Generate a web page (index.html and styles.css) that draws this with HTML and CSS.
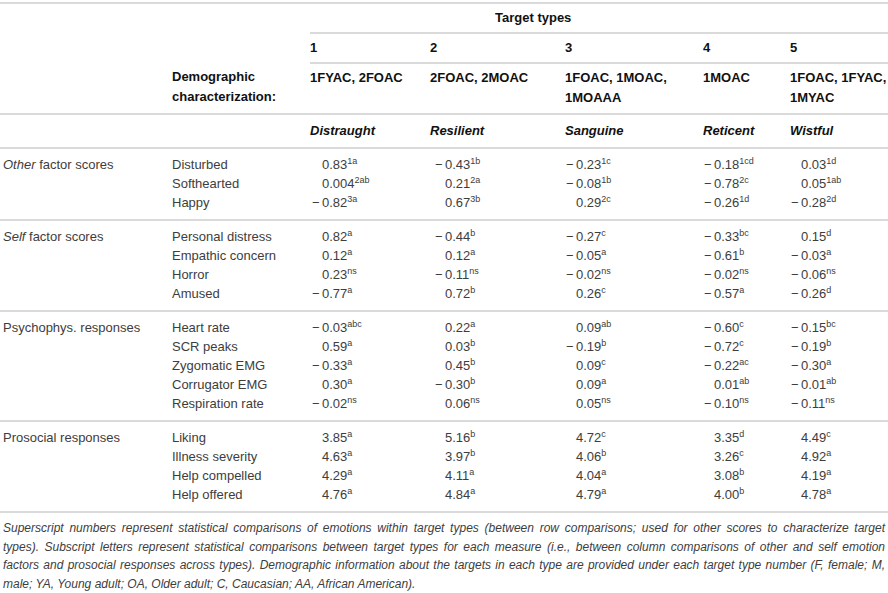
FILE: index.html
```html
<!DOCTYPE html>
<html lang="en">
<head>
    <meta charset="UTF-8">
    <meta name="viewport" content="width=device-width, initial-scale=1.0">
    <title>Target types</title>
    <link rel="stylesheet" href="styles.css">
</head>
<body>
    <div class="table-wrap">
        <table class="data">
            <colgroup>
                <col class="c-group">
                <col class="c-measure">
                <col class="c-t1">
                <col class="c-t2">
                <col class="c-t3">
                <col class="c-t4">
                <col class="c-t5">
            </colgroup>
            <thead>
                <tr class="head-top">
                    <th colspan="2"></th>
                    <th colspan="5" class="line span-title">Target types</th>
                </tr>
                <tr class="head-num">
                    <th colspan="2"></th>
                    <th class="line">1</th>
                    <th class="line">2</th>
                    <th class="line">3</th>
                    <th class="line">4</th>
                    <th class="line">5</th>
                </tr>
                <tr class="head-demo line-row">
                    <th></th>
                    <th>Demographic characterization:</th>
                    <th>1FYAC, 2FOAC</th>
                    <th>2FOAC, 2MOAC</th>
                    <th>1FOAC, 1MOAC, 1MOAAA</th>
                    <th>1MOAC</th>
                    <th>1FOAC, 1FYAC, 1MYAC</th>
                </tr>
                <tr class="head-name line-row">
                    <th></th>
                    <th></th>
                    <th><em>Distraught</em></th>
                    <th><em>Resilient</em></th>
                    <th><em>Sanguine</em></th>
                    <th><em>Reticent</em></th>
                    <th><em>Wistful</em></th>
                </tr>
            </thead>
            <tbody>
                <tr>
                    <td><em>Other</em> factor scores</td>
                    <td>Disturbed</td>
                    <td><span class="sg"></span>0.83<sup>1a</sup></td>
                    <td><span class="sg">&minus;</span>0.43<sup>1b</sup></td>
                    <td><span class="sg">&minus;</span>0.23<sup>1c</sup></td>
                    <td><span class="sg">&minus;</span>0.18<sup>1cd</sup></td>
                    <td><span class="sg"></span>0.03<sup>1d</sup></td>
                </tr>
                <tr>
                    <td></td>
                    <td>Softhearted</td>
                    <td><span class="sg"></span>0.004<sup>2ab</sup></td>
                    <td><span class="sg"></span>0.21<sup>2a</sup></td>
                    <td><span class="sg">&minus;</span>0.08<sup>1b</sup></td>
                    <td><span class="sg">&minus;</span>0.78<sup>2c</sup></td>
                    <td><span class="sg"></span>0.05<sup>1ab</sup></td>
                </tr>
                <tr>
                    <td></td>
                    <td>Happy</td>
                    <td><span class="sg">&minus;</span>0.82<sup>3a</sup></td>
                    <td><span class="sg"></span>0.67<sup>3b</sup></td>
                    <td><span class="sg"></span>0.29<sup>2c</sup></td>
                    <td><span class="sg">&minus;</span>0.26<sup>1d</sup></td>
                    <td><span class="sg">&minus;</span>0.28<sup>2d</sup></td>
                </tr>
            </tbody>
            <tbody>
                <tr>
                    <td><em>Self</em> factor scores</td>
                    <td>Personal distress</td>
                    <td><span class="sg"></span>0.82<sup>a</sup></td>
                    <td><span class="sg">&minus;</span>0.44<sup>b</sup></td>
                    <td><span class="sg">&minus;</span>0.27<sup>c</sup></td>
                    <td><span class="sg">&minus;</span>0.33<sup>bc</sup></td>
                    <td><span class="sg"></span>0.15<sup>d</sup></td>
                </tr>
                <tr>
                    <td></td>
                    <td>Empathic concern</td>
                    <td><span class="sg"></span>0.12<sup>a</sup></td>
                    <td><span class="sg"></span>0.12<sup>a</sup></td>
                    <td><span class="sg">&minus;</span>0.05<sup>a</sup></td>
                    <td><span class="sg">&minus;</span>0.61<sup>b</sup></td>
                    <td><span class="sg">&minus;</span>0.03<sup>a</sup></td>
                </tr>
                <tr>
                    <td></td>
                    <td>Horror</td>
                    <td><span class="sg"></span>0.23<sup>ns</sup></td>
                    <td><span class="sg">&minus;</span>0.11<sup>ns</sup></td>
                    <td><span class="sg">&minus;</span>0.02<sup>ns</sup></td>
                    <td><span class="sg">&minus;</span>0.02<sup>ns</sup></td>
                    <td><span class="sg">&minus;</span>0.06<sup>ns</sup></td>
                </tr>
                <tr>
                    <td></td>
                    <td>Amused</td>
                    <td><span class="sg">&minus;</span>0.77<sup>a</sup></td>
                    <td><span class="sg"></span>0.72<sup>b</sup></td>
                    <td><span class="sg"></span>0.26<sup>c</sup></td>
                    <td><span class="sg">&minus;</span>0.57<sup>a</sup></td>
                    <td><span class="sg">&minus;</span>0.26<sup>d</sup></td>
                </tr>
            </tbody>
            <tbody>
                <tr>
                    <td>Psychophys. responses</td>
                    <td>Heart rate</td>
                    <td><span class="sg">&minus;</span>0.03<sup>abc</sup></td>
                    <td><span class="sg"></span>0.22<sup>a</sup></td>
                    <td><span class="sg"></span>0.09<sup>ab</sup></td>
                    <td><span class="sg">&minus;</span>0.60<sup>c</sup></td>
                    <td><span class="sg">&minus;</span>0.15<sup>bc</sup></td>
                </tr>
                <tr>
                    <td></td>
                    <td>SCR peaks</td>
                    <td><span class="sg"></span>0.59<sup>a</sup></td>
                    <td><span class="sg"></span>0.03<sup>b</sup></td>
                    <td><span class="sg">&minus;</span>0.19<sup>b</sup></td>
                    <td><span class="sg">&minus;</span>0.72<sup>c</sup></td>
                    <td><span class="sg">&minus;</span>0.19<sup>b</sup></td>
                </tr>
                <tr>
                    <td></td>
                    <td>Zygomatic EMG</td>
                    <td><span class="sg">&minus;</span>0.33<sup>a</sup></td>
                    <td><span class="sg"></span>0.45<sup>b</sup></td>
                    <td><span class="sg"></span>0.09<sup>c</sup></td>
                    <td><span class="sg">&minus;</span>0.22<sup>ac</sup></td>
                    <td><span class="sg">&minus;</span>0.30<sup>a</sup></td>
                </tr>
                <tr>
                    <td></td>
                    <td>Corrugator EMG</td>
                    <td><span class="sg"></span>0.30<sup>a</sup></td>
                    <td><span class="sg">&minus;</span>0.30<sup>b</sup></td>
                    <td><span class="sg"></span>0.09<sup>a</sup></td>
                    <td><span class="sg"></span>0.01<sup>ab</sup></td>
                    <td><span class="sg">&minus;</span>0.01<sup>ab</sup></td>
                </tr>
                <tr>
                    <td></td>
                    <td>Respiration rate</td>
                    <td><span class="sg">&minus;</span>0.02<sup>ns</sup></td>
                    <td><span class="sg"></span>0.06<sup>ns</sup></td>
                    <td><span class="sg"></span>0.05<sup>ns</sup></td>
                    <td><span class="sg">&minus;</span>0.10<sup>ns</sup></td>
                    <td><span class="sg">&minus;</span>0.11<sup>ns</sup></td>
                </tr>
            </tbody>
            <tbody>
                <tr>
                    <td>Prosocial responses</td>
                    <td>Liking</td>
                    <td><span class="sg"></span>3.85<sup>a</sup></td>
                    <td><span class="sg"></span>5.16<sup>b</sup></td>
                    <td><span class="sg"></span>4.72<sup>c</sup></td>
                    <td><span class="sg"></span>3.35<sup>d</sup></td>
                    <td><span class="sg"></span>4.49<sup>c</sup></td>
                </tr>
                <tr>
                    <td></td>
                    <td>Illness severity</td>
                    <td><span class="sg"></span>4.63<sup>a</sup></td>
                    <td><span class="sg"></span>3.97<sup>b</sup></td>
                    <td><span class="sg"></span>4.06<sup>b</sup></td>
                    <td><span class="sg"></span>3.26<sup>c</sup></td>
                    <td><span class="sg"></span>4.92<sup>a</sup></td>
                </tr>
                <tr>
                    <td></td>
                    <td>Help compelled</td>
                    <td><span class="sg"></span>4.29<sup>a</sup></td>
                    <td><span class="sg"></span>4.11<sup>a</sup></td>
                    <td><span class="sg"></span>4.04<sup>a</sup></td>
                    <td><span class="sg"></span>3.08<sup>b</sup></td>
                    <td><span class="sg"></span>4.19<sup>a</sup></td>
                </tr>
                <tr>
                    <td></td>
                    <td>Help offered</td>
                    <td><span class="sg"></span>4.76<sup>a</sup></td>
                    <td><span class="sg"></span>4.84<sup>a</sup></td>
                    <td><span class="sg"></span>4.79<sup>a</sup></td>
                    <td><span class="sg"></span>4.00<sup>b</sup></td>
                    <td><span class="sg"></span>4.78<sup>a</sup></td>
                </tr>
            </tbody>
        </table>
        <p class="footnote">
            <span class="fn-line">Superscript numbers represent statistical comparisons of emotions within target types (between row comparisons; used for other scores to characterize target</span>
            <span class="fn-line">types). Subscript letters represent statistical comparisons between target types for each measure (i.e., between column comparisons of other and self emotion</span>
            <span class="fn-line">factors and prosocial responses across types). Demographic information about the targets in each type are provided under each target type number (F, female; M,</span>
            <span class="fn-line last">male; YA, Young adult; OA, Older adult; C, Caucasian; AA, African American).</span>
        </p>
    </div>
</body>
</html>
```

FILE: styles.css
```css
body {
    margin: 0;
    background: #fff;
    font-family: "Liberation Sans", Arial, sans-serif;
    font-size: 13px;
    color: #3d3d3d;
    overflow: hidden;
}

.table-wrap {
    width: 888px;
    padding-top: 2px;
}

.data {
    width: 888px;
    border-collapse: collapse;
    table-layout: fixed;
    border-top: 2px solid #dadada;
}

.c-group { width: 172px; }
.c-measure { width: 138px; }
.c-t1 { width: 120px; }
.c-t2 { width: 135px; }
.c-t3 { width: 138px; }
.c-t4 { width: 87px; }
.c-t5 { width: 98px; }

th, td {
    padding: 0;
    text-align: left;
    vertical-align: top;
    line-height: 19px;
    white-space: nowrap;
}

th {
    font-weight: bold;
    color: #111;
    padding: 4px 0 5px;
}

th.line {
    border-bottom: 2px solid #dadada;
}

.span-title {
    padding-left: 185px;
}

.head-demo th {
    white-space: normal;
    line-height: 20px;
    padding: 4px 0 5px;
}

.line-row th {
    border-bottom: 2px solid #dadada;
}

.head-name th {
    padding: 6px 0 7px;
}

td:first-child {
    padding-left: 3px;
}

tbody {
    border-bottom: 2px solid #dadada;
}

tbody tr:first-child td {
    padding-top: 6px;
}

tbody tr:last-child td {
    padding-bottom: 7px;
}

.sg {
    display: inline-block;
    width: 10px;
}

td:nth-child(3) { padding-left: 2px; }
td:nth-child(4) { padding-left: 5px; }
td:nth-child(5),
td:nth-child(6),
td:nth-child(7) { padding-left: 1px; }

sup {
    font-size: 9px;
    line-height: 0;
    vertical-align: 5px;
}

.footnote {
    margin: 0;
    padding: 6px 3px 0;
    font-size: 12px;
    font-style: italic;
    line-height: 18.7px;
    color: #3d3d3d;
}

.fn-line {
    display: block;
    text-align: justify;
    text-align-last: justify;
}

.fn-line.last {
    text-align-last: left;
}
```
